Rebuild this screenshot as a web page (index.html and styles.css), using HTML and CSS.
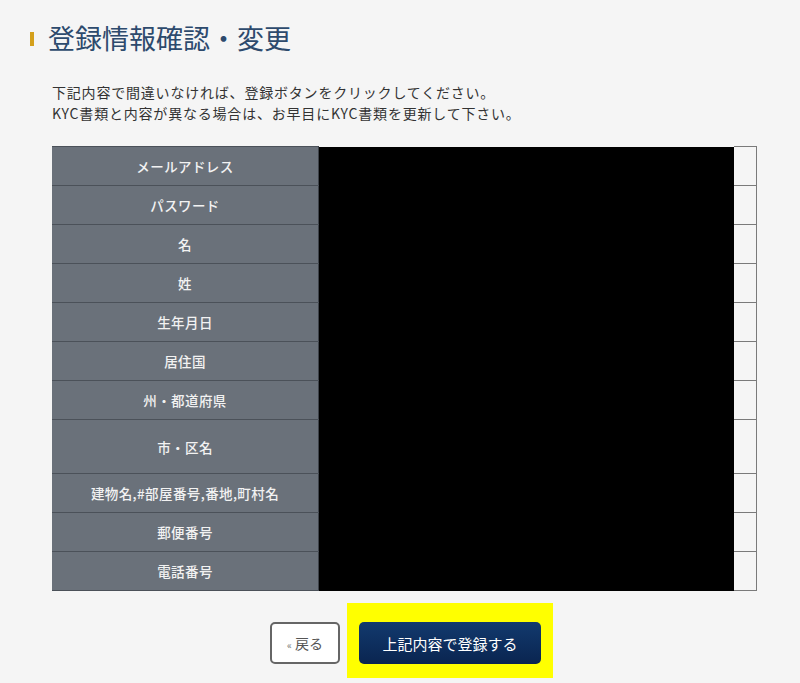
FILE: index.html
```html
<!DOCTYPE html>
<html lang="ja">
<head>
<meta charset="UTF-8">
<title>登録情報確認・変更</title>
<link rel="stylesheet" href="styles.css">
</head>
<body>
  <div class="page">
    <h1 class="title">登録情報確認・変更</h1>
    <p class="lead">
      下記内容で間違いなければ、登録ボタンをクリックしてください。<br>
      KYC書類と内容が異なる場合は、お早目にKYC書類を更新して下さい。
    </p>
    <table class="confirm">
      <tr><th>メールアドレス</th><td class="val"></td><td class="pad"></td></tr>
      <tr><th>パスワード</th><td class="val"></td><td class="pad"></td></tr>
      <tr><th>名</th><td class="val"></td><td class="pad"></td></tr>
      <tr><th>姓</th><td class="val"></td><td class="pad"></td></tr>
      <tr><th>生年月日</th><td class="val"></td><td class="pad"></td></tr>
      <tr><th>居住国</th><td class="val"></td><td class="pad"></td></tr>
      <tr><th>州・都道府県</th><td class="val"></td><td class="pad"></td></tr>
      <tr class="tall"><th>市・区名</th><td class="val"></td><td class="pad"></td></tr>
      <tr><th>建物名,#部屋番号,番地,町村名</th><td class="val"></td><td class="pad"></td></tr>
      <tr><th>郵便番号</th><td class="val"></td><td class="pad"></td></tr>
      <tr><th>電話番号</th><td class="val"></td><td class="pad"></td></tr>
    </table>
    <div class="actions">
      <button class="back"><small>«</small> 戻る</button>
      <div class="mark">
        <button class="submit">上記内容で登録する</button>
      </div>
    </div>
  </div>
</body>
</html>
```

FILE: styles.css
```css
body {
  margin: 0;
  background: #f5f5f5;
  font-family: "Noto Sans CJK JP", "Liberation Sans", sans-serif;
  color: #333;
}
.page {
  padding: 22px 43px 0 30px;
}
.title {
  display: flex;
  align-items: center;
  margin: 0;
  font-size: 27px;
  line-height: 32px;
  font-weight: normal;
  color: #2d4a6d;
}
.title::before {
  content: "";
  width: 4px;
  height: 14px;
  margin: 2px 14px 0 0;
  background: #d4a01c;
}
.lead {
  margin: 28px 0 0 22px;
  font-size: 14px;
  line-height: 21px;
  letter-spacing: 0.8px;
  color: #333;
}
.confirm {
  margin: 22px 0 0 22px;
  width: 705px;
  border-collapse: collapse;
}
.confirm th {
  width: 266px;
  height: 38px;
  padding: 0;
  background: #6a717a;
  border-top: 1px solid #4b5159;
  border-bottom: 1px solid #4b5159;
  border-right: 1px solid #3e434a;
  color: #f2f2f2;
  font-size: 13.5px;
  font-weight: 500;
  letter-spacing: 0.4px;
  text-align: center;
}
.confirm tr.tall th {
  height: 53px;
}
.confirm .val {
  width: 415px;
  padding: 0;
  background: #000;
}
.confirm .pad {
  padding: 0;
  border: 1px solid #7a7a7a;
  border-left: none;
  background: #f5f5f5;
}
.actions {
  display: flex;
  justify-content: center;
  align-items: center;
  gap: 7px;
  margin: 12px 0 0 29px;
  width: 705px;
}
.back {
  width: 70px;
  height: 42px;
  margin-top: 5px;
  border: 2px solid #666;
  border-radius: 5px;
  background: #fff;
  color: #555;
  font-family: inherit;
  font-size: 14px;
}
.back small {
  font-size: 10px;
  color: #777;
}
.mark {
  padding: 19px 12px 14px;
  background: #ffff00;
}
.submit {
  width: 182px;
  height: 42px;
  border: none;
  border-radius: 5px;
  background: linear-gradient(#123a6e, #0a2550);
  color: #fff;
  font-family: inherit;
  font-size: 15px;
}
```
